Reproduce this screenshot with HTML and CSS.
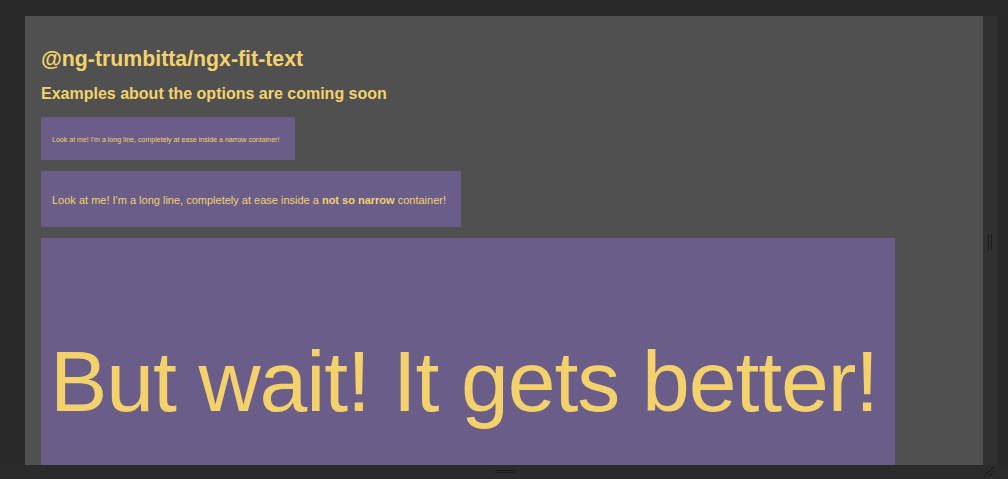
FILE: index.html
```html
<!DOCTYPE html>
<html>
<head>
<meta charset="utf-8">
<link rel="stylesheet" href="styles.css">
</head>
<body>
<div class="frame">
  <div class="top-band"></div>
  <div class="middle">
    <div class="left-band"></div>
    <main class="panel">
      <h1 class="title">@ng-trumbitta/ngx-fit-text</h1>
      <h2 class="subtitle">Examples about the options are coming soon</h2>
      <div class="box box-narrow"><span class="fit fit-small">Look at me! I'm a long line, completely at ease inside a narrow container!</span></div>
      <div class="box box-wide"><span class="fit fit-medium">Look at me! I'm a long line, completely at ease inside a <b>not so narrow</b> container!</span></div>
      <div class="box box-big"><span class="fit fit-big">But wait! It gets better!</span></div>
    </main>
    <div class="right-band">
      <div class="grip"><i></i><i></i></div>
    </div>
    <div class="edge-band"></div>
  </div>
  <div class="bottom-band">
    <div class="bottom-handle"></div>
    <div class="corner-grip"></div>
  </div>
</div>
</body>
</html>
```
FILE: styles.css
```css
html, body {
  margin: 0;
  padding: 0;
  background: #2a2a2a;
}
body {
  width: 1008px;
  height: 479px;
  overflow: hidden;
  font-family: "Liberation Sans", Arial, Helvetica, sans-serif;
}
.frame {
  display: flex;
  flex-direction: column;
  width: 1008px;
  height: 479px;
}
.top-band {
  height: 16px;
  background: #292929;
  flex: none;
}
.middle {
  display: flex;
  height: 449px;
  flex: none;
}
.left-band {
  width: 25px;
  background: #292929;
  flex: none;
}
.panel {
  width: 958px;
  flex: none;
  background: #505050;
  overflow: hidden;
  padding: 31px 0 0 16px;
  box-sizing: border-box;
}
.right-band {
  width: 14px;
  background: #303030;
  flex: none;
  display: flex;
  align-items: flex-start;
  justify-content: center;
}
.grip {
  margin-top: 218px;
  display: flex;
  gap: 2px;
}
.grip i {
  display: block;
  width: 1px;
  height: 16px;
  background: #1c1c1c;
}
.edge-band {
  width: 11px;
  background: #282828;
  flex: none;
}
.bottom-band {
  height: 14px;
  background: #2b2b2b;
  flex: none;
  position: relative;
}
.bottom-handle {
  position: absolute;
  left: 495px;
  top: 5px;
  width: 20px;
  height: 3px;
  border-top: 1px solid #1a1a1a;
  border-bottom: 1px solid #1a1a1a;
  box-sizing: border-box;
}
.corner-grip {
  position: absolute;
  right: 14px;
  bottom: 2px;
  width: 10px;
  height: 10px;
  background: linear-gradient(135deg, transparent 45%, #1a1a1a 45%, #1a1a1a 52%, transparent 52%, transparent 68%, #1a1a1a 68%, #1a1a1a 75%, transparent 75%);
}
.title {
  margin: 0;
  font-size: 21.3px;
  line-height: 24px;
  font-weight: bold;
  color: #f3d26d;
}
.subtitle {
  margin: 13px 0 0 0;
  font-size: 16px;
  line-height: 19px;
  font-weight: bold;
  color: #f3d26d;
}
.box {
  background: #6a5d87;
  color: #f3d26d;
  box-sizing: border-box;
  display: flex;
  align-items: center;
  white-space: nowrap;
}
.box-narrow {
  margin-top: 14px;
  width: 254px;
  height: 43px;
  padding: 1px 0 0 11px;
}
.box-wide {
  margin-top: 11px;
  width: 420px;
  height: 56px;
  padding: 2px 0 0 11px;
}
.box-big {
  margin-top: 11px;
  width: 854px;
  height: 320px;
  align-items: flex-start;
  padding: 100px 0 0 9px;
}
.fit-small {
  font-size: 7.05px;
}
.fit-medium {
  font-size: 11px;
}
.fit-big {
  font-size: 86px;
  line-height: 1;
  letter-spacing: -1.1px;
}
```
